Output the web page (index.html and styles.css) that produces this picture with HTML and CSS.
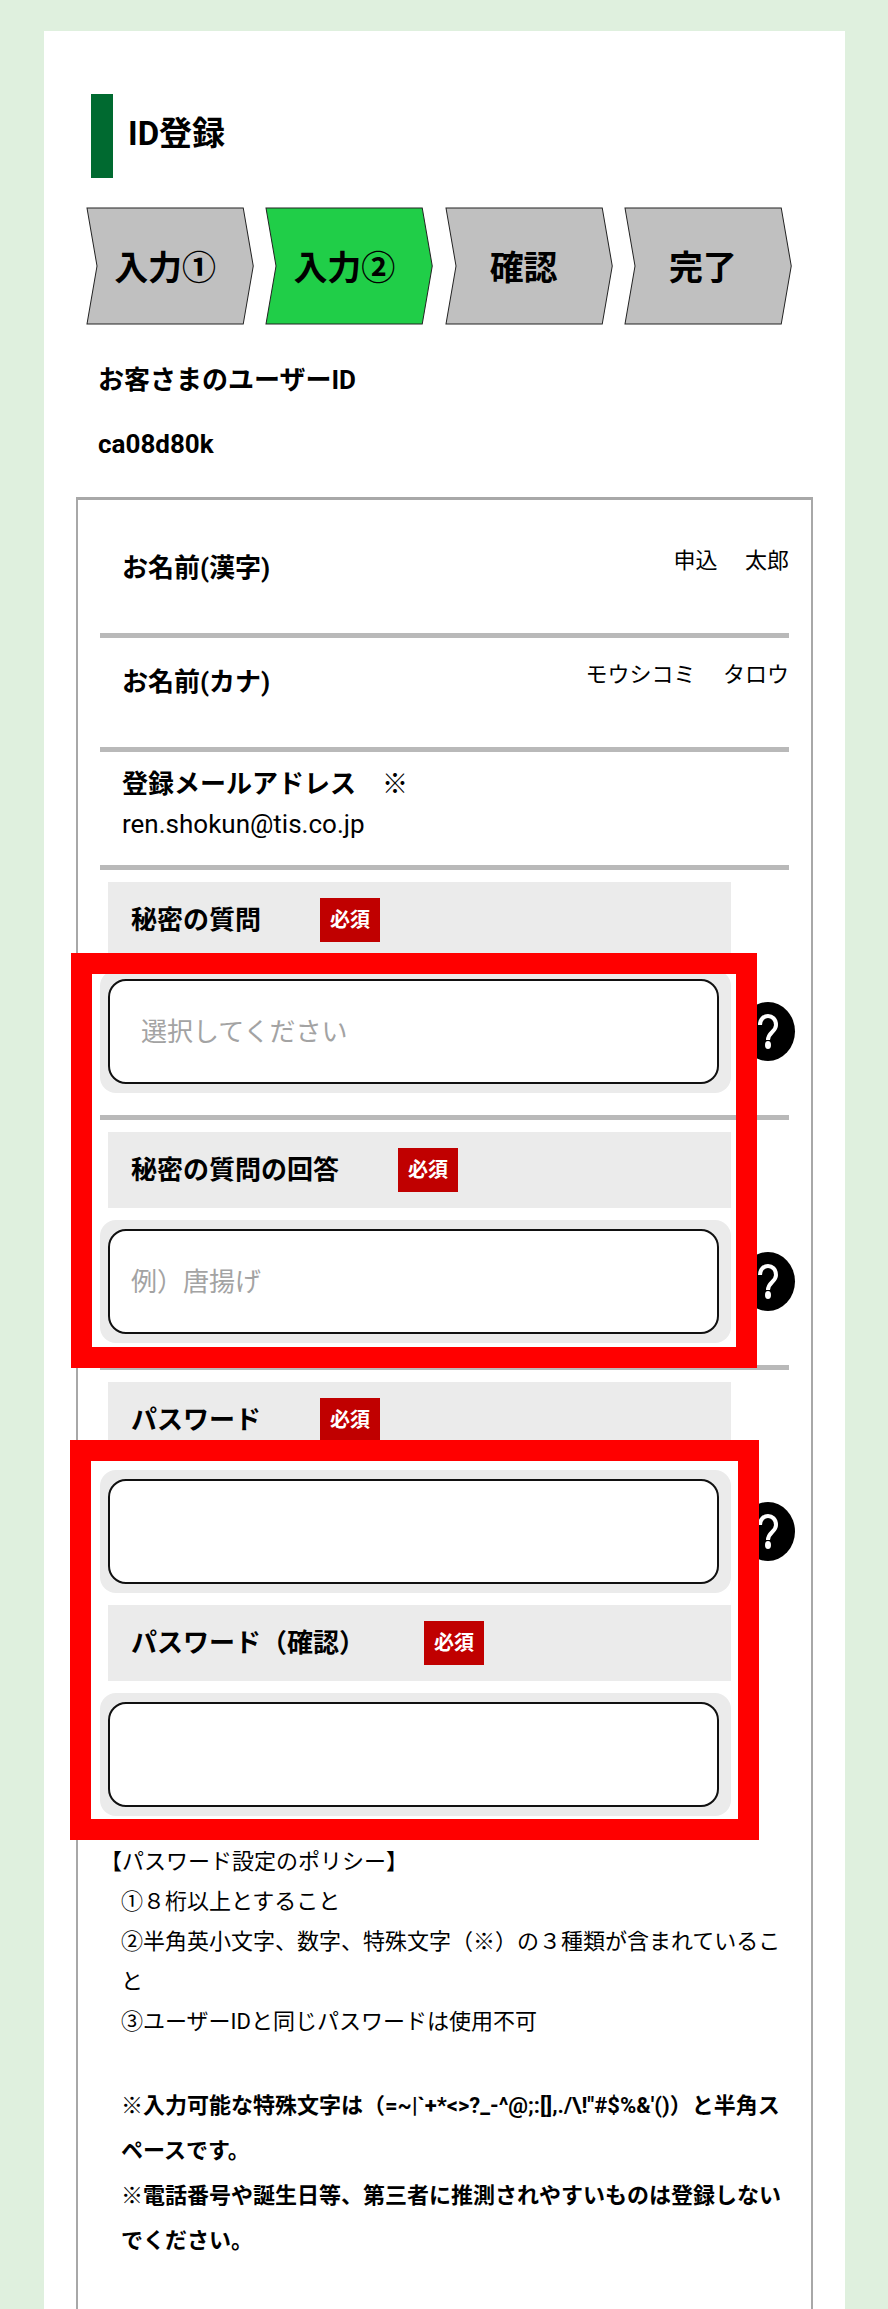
FILE: index.html
```html
<!DOCTYPE html>
<html lang="ja">
<head>
  <meta charset="UTF-8">
  <meta name="viewport" content="width=device-width, initial-scale=1.0">
  <title>ID登録</title>
  <link rel="stylesheet" href="styles.css">
</head>
<body>
  <main class="card">
    <h1>ID登録</h1>

    <ol class="steps">
      <li class="step">
        <svg viewBox="0 0 168 118" preserveAspectRatio="none"><path d="M1 1H157L167 59L157 117H1L11 59Z"/></svg>
        <span>入力①</span>
      </li>
      <li class="step active">
        <svg viewBox="0 0 168 118" preserveAspectRatio="none"><path d="M1 1H157L167 59L157 117H1L11 59Z"/></svg>
        <span>入力②</span>
      </li>
      <li class="step">
        <svg viewBox="0 0 168 118" preserveAspectRatio="none"><path d="M1 1H157L167 59L157 117H1L11 59Z"/></svg>
        <span>確認</span>
      </li>
      <li class="step">
        <svg viewBox="0 0 168 118" preserveAspectRatio="none"><path d="M1 1H157L167 59L157 117H1L11 59Z"/></svg>
        <span>完了</span>
      </li>
    </ol>

    <div class="user-id">
      <p>お客さまのユーザーID</p>
      <p>ca08d80k</p>
    </div>

    <form class="form-box">
      <div class="row">
        <span class="row-label">お名前(漢字)</span>
        <span class="row-value">申込　 太郎</span>
      </div>
      <div class="row">
        <span class="row-label">お名前(カナ)</span>
        <span class="row-value">モウシコミ　 タロウ</span>
      </div>
      <div class="row mail">
        <span class="row-label">登録メールアドレス　※</span>
        <span class="mail-value">ren.shokun@tis.co.jp</span>
      </div>

      <div class="group">
        <div class="section">
          <div class="label-bar">
            <label for="question">秘密の質問</label>
            <span class="required">必須</span>
          </div>
          <div class="field-row">
            <div class="field">
              <select id="question">
                <option>選択してください</option>
              </select>
            </div>
            <button type="button" class="help" aria-label="ヘルプ">
              <svg viewBox="0 0 54 59"><path d="M19 23C19 11 35 11 35 23C35 30 27 30 27 38"/><ellipse cx="27" cy="43" rx="3" ry="4"/></svg>
            </button>
          </div>
        </div>
        <div class="section">
          <div class="label-bar">
            <label for="answer">秘密の質問の回答</label>
            <span class="required">必須</span>
          </div>
          <div class="field-row">
            <div class="field">
              <input type="text" id="answer" placeholder="例）唐揚げ">
            </div>
            <button type="button" class="help" aria-label="ヘルプ">
              <svg viewBox="0 0 54 59"><path d="M19 23C19 11 35 11 35 23C35 30 27 30 27 38"/><ellipse cx="27" cy="43" rx="3" ry="4"/></svg>
            </button>
          </div>
        </div>
        <div class="frame"></div>
      </div>

      <div class="group">
        <div class="section last">
          <div class="label-bar">
            <label for="password">パスワード</label>
            <span class="required">必須</span>
          </div>
          <div class="field-row">
            <div class="field">
              <input type="password" id="password">
            </div>
            <button type="button" class="help" aria-label="ヘルプ">
              <svg viewBox="0 0 54 59"><path d="M19 23C19 11 35 11 35 23C35 30 27 30 27 38"/><ellipse cx="27" cy="43" rx="3" ry="4"/></svg>
            </button>
          </div>
          <div class="label-bar">
            <label for="password-confirm">パスワード（確認）</label>
            <span class="required">必須</span>
          </div>
          <div class="field-row">
            <div class="field">
              <input type="password" id="password-confirm">
            </div>
          </div>
        </div>
        <div class="frame frame-password"></div>
      </div>

      <div class="policy">
        <p>【パスワード設定のポリシー】</p>
        <ul>
          <li>①８桁以上とすること</li>
          <li>②半角英小文字、数字、特殊文字（※）の３種類が含まれていること</li>
          <li>③ユーザーIDと同じパスワードは使用不可</li>
        </ul>
        <div class="notes">
          <p>※入力可能な特殊文字は（=~|`+*&lt;&gt;?_-^@;:[],./\!"#$%&amp;'()）と半角スペースです。</p>
          <p>※電話番号や誕生日等、第三者に推測されやすいものは登録しないでください。</p>
        </div>
      </div>
    </form>
  </main>
</body>
</html>
```
FILE: styles.css
```css
* {
  box-sizing: border-box;
}
body {
  display: flex;
  flex-direction: column;
  min-height: 100vh;
  margin: 0;
  padding: 31px 43px 0 44px;
  background-color: #dff0de;
  color: #000;
  font-family: Roboto, "Noto Sans CJK JP", sans-serif;
  font-size: 26px;
  line-height: 40px;
}
p, ul, ol {
  margin: 0;
  padding: 0;
  list-style: none;
}
.card {
  flex: 1;
  display: flex;
  flex-direction: column;
  padding: 63px 32px 0;
  background-color: #fff;
}
h1 {
  margin: 0 0 29px 15px;
  padding: 16px 0 20px 15px;
  border-left: 22px solid #006a30;
  font-size: 33px;
  line-height: 48px;
}
.steps {
  display: flex;
  gap: 11px;
  margin: 0 21px 0 10px;
}
.step {
  flex: 1;
  display: grid;
  height: 118px;
  font-size: 34px;
  font-weight: bold;
}
.step svg, .step span {
  grid-area: 1 / 1;
}
.step svg {
  width: 100%;
  height: 118px;
  fill: #c0c0c0;
  stroke: #222;
  stroke-width: 1;
}
.step.active svg {
  fill: #20ce48;
}
.step span {
  place-self: center;
  padding: 4px 10px 0 0;
}
.user-id {
  display: flex;
  flex-direction: column;
  gap: 24px;
  padding: 35px 0 33px 22px;
  font-weight: bold;
}
.form-box {
  flex: 1;
  padding: 24px 22px 0;
  border: 2px solid #a8a8a8;
  border-top-width: 3px;
  border-bottom: none;
}
.row {
  display: flex;
  justify-content: space-between;
  height: 114px;
  border-bottom: 5px solid #b9b9b9;
}
.row-label {
  padding: 24px 0 0 22px;
  font-weight: bold;
}
.row-value {
  padding-top: 17px;
  font-size: 22px;
}
.row.mail {
  flex-direction: column;
  justify-content: flex-start;
  height: 118px;
  padding: 12px 0 0 22px;
}
.mail .row-label {
  padding: 0;
}
.group {
  position: relative;
}
.section {
  display: flex;
  flex-direction: column;
  gap: 12px;
  padding: 12px 0 22px;
  border-bottom: 5px solid #b9b9b9;
}
.section.last {
  padding-bottom: 24px;
  border-bottom: none;
}
.label-bar {
  display: flex;
  align-items: center;
  gap: 59px;
  height: 76px;
  margin: 0 58px 0 8px;
  padding-left: 23px;
  background-color: #ebebeb;
  font-weight: bold;
}
.required {
  padding: 0 10px;
  background-color: #c00000;
  color: #fff;
  font-size: 20px;
  line-height: 44px;
}
.field-row {
  display: grid;
  grid-template-columns: 1fr 54px;
  align-items: center;
  gap: 10px;
  margin-right: -6px;
}
.field {
  padding: 9px 12px 9px 8px;
  border-radius: 16px;
  background-color: #ebebeb;
}
.field input, .field select {
  display: block;
  width: 100%;
  height: 105px;
  padding: 0 21px;
  border: 2px solid #111;
  border-radius: 18px;
  background-color: #fff;
  color: #000;
  font: inherit;
  appearance: none;
}
.field select {
  padding-left: 31px;
  color: #a3a3a3;
}
.field input::placeholder {
  color: #a3a3a3;
}
.help {
  width: 54px;
  height: 59px;
  padding: 0;
  border: none;
  border-radius: 50%;
  background-color: #000;
}
.help svg {
  display: block;
  fill: none;
  stroke: #fff;
  stroke-width: 4;
}
.help ellipse {
  fill: #fff;
  stroke: none;
}
/* red emphasis frames over the fields */
.frame {
  position: absolute;
  top: 83px;
  right: 32px;
  bottom: 2px;
  left: -29px;
  border: 21px solid #f00;
  pointer-events: none;
}
.frame-password {
  top: 70px;
  right: 30px;
  bottom: 0;
  left: -30px;
}
.policy {
  padding-top: 2px;
  font-size: 22px;
}
.policy ul, .notes {
  padding-left: 21px;
}
.notes {
  padding-top: 41px;
  padding-bottom: 46px;
  font-weight: bold;
  line-height: 45px;
}
```
